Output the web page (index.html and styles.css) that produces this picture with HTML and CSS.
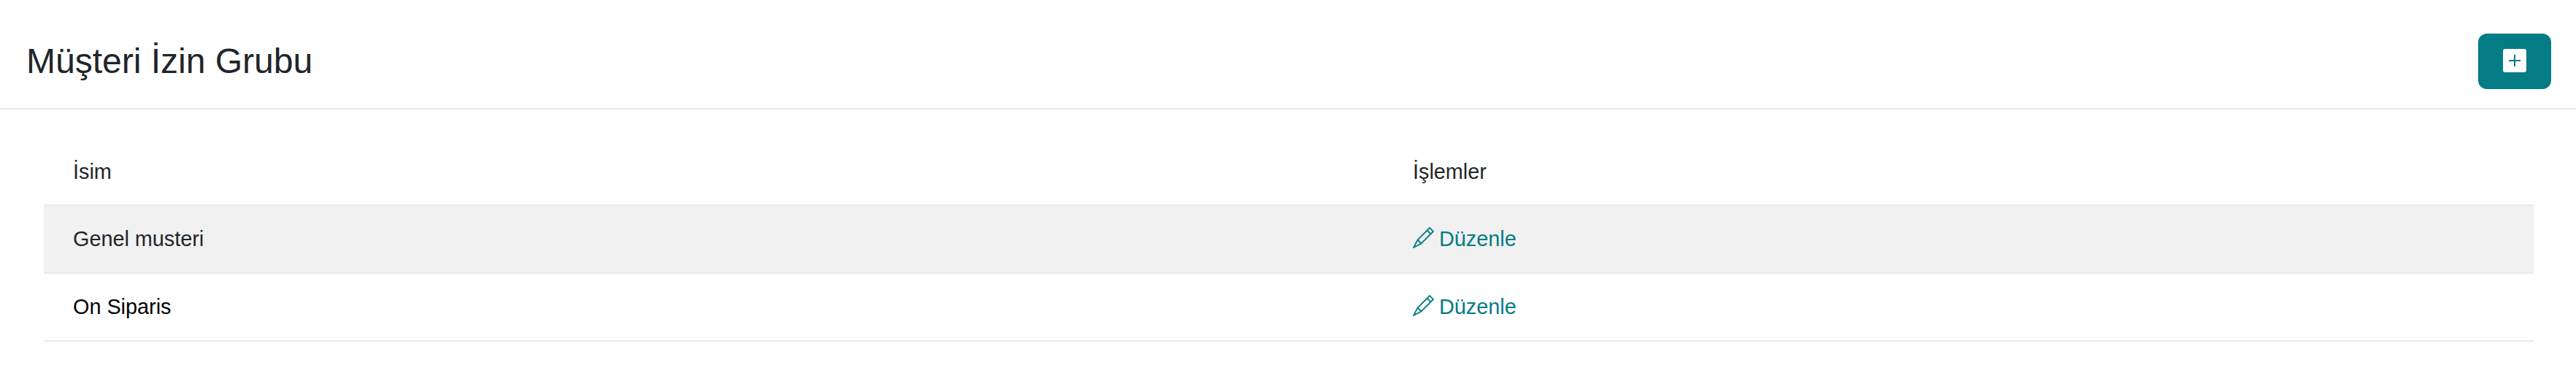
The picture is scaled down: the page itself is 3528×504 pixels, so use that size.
FILE: index.html
```html
<!DOCTYPE html>
<html lang="tr">
<head>
<meta charset="utf-8">
<title>Müşteri İzin Grubu</title>
<link rel="stylesheet" href="styles.css">
</head>
<body>
<header class="page-header">
  <h1 class="page-title">Müşteri İzin Grubu</h1>
  <button class="add-button" type="button" aria-label="Ekle">
    <svg class="add-icon" viewBox="0 0 32 32" aria-hidden="true">
      <rect width="32" height="32" rx="3" fill="#fff"/>
      <path d="M16 8v16M8 16h16" stroke="#047c86" stroke-width="2" fill="none"/>
    </svg>
  </button>
</header>
<main class="content">
  <table class="data-table">
    <thead>
      <tr><th class="col-name">İsim</th><th>İşlemler</th></tr>
    </thead>
    <tbody>
      <tr class="row-muted">
        <td>Genel musteri</td>
        <td><a class="edit-link" href="#"><svg class="edit-icon" viewBox="0 0 29 29" aria-hidden="true"><path d="M1 28l5.500-10.500L23 1l5 5-16.500 16.500z M6.500 17.500l5 5 M19.500 4.500l5 5" fill="none" stroke="currentColor" stroke-width="1.800" stroke-linejoin="miter"/></svg>Düzenle</a></td>
      </tr>
      <tr class="row-plain">
        <td>On Siparis</td>
        <td><a class="edit-link" href="#"><svg class="edit-icon" viewBox="0 0 29 29" aria-hidden="true"><path d="M1 28l5.500-10.500L23 1l5 5-16.500 16.500z M6.500 17.500l5 5 M19.500 4.500l5 5" fill="none" stroke="currentColor" stroke-width="1.800" stroke-linejoin="miter"/></svg>Düzenle</a></td>
      </tr>
    </tbody>
  </table>
</main>
</body>
</html>
```
FILE: styles.css
```css
* { box-sizing: border-box; }
html, body { margin: 0; background: #fff; }
body {
  font-family: "Liberation Sans", Arial, sans-serif;
  font-size: 28.8px;
  color: #212529;
}
.page-header {
  height: 150px;
  padding: 46px 34px 26px 36px;
  display: flex;
  align-items: center;
  justify-content: space-between;
  border-bottom: 2px solid #e9e9e9;
}
.page-title { margin: 0; font-size: 48px; font-weight: 400; line-height: 58px; }
.add-button {
  width: 100px;
  height: 76px;
  padding: 0 0 2px;
  border: 0;
  border-radius: 12px;
  background: #047c86;
  display: flex;
  align-items: center;
  justify-content: center;
}
.add-icon { width: 32px; height: 32px; display: block; }
.content { padding: 40px 58px 0 60px; }
.data-table { width: 100%; border-collapse: separate; border-spacing: 0; table-layout: fixed; }
.data-table th, .data-table td { padding: 0 40px; text-align: left; font-weight: 400; border-bottom: 2px solid #e9e9e9; }
.data-table th { height: 92px; }
.data-table td { height: 93px; }
.col-name { width: 1835px; }
.row-muted { background: #f1f1f1; }
.row-plain td:first-child { color: #000; }
.edit-link { color: #047c86; text-decoration: none; }
.edit-icon { width: 29px; height: 29px; margin-right: 7px; vertical-align: -3px; }
```
